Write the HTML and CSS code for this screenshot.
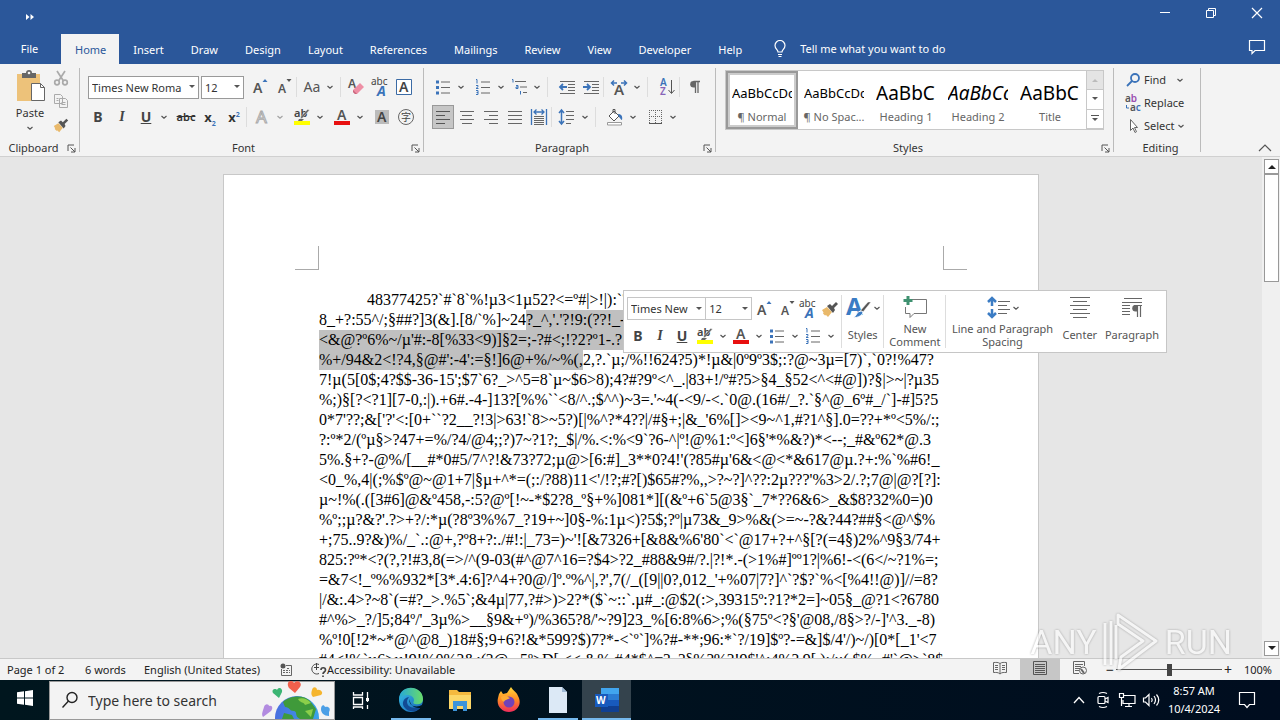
FILE: index.html
```html
<!DOCTYPE html>
<html lang="en">
<head>
<meta charset="utf-8">
<title>Word</title>
<link rel="stylesheet" href="styles.css">
</head>
<body>
<svg class="defs" aria-hidden="true">
  <symbol id="chev" viewBox="0 0 8 8"><path d="M1.5 3 4 5.200 6.500 3" fill="none" stroke="#555" stroke-width="1.200"/></symbol>
  <symbol id="launch" viewBox="0 0 9 9"><path d="M1 7V1h6M3.500 3.500 8 8M8 4v4H4" fill="none" stroke="#555"/></symbol>
  <symbol id="clear-style" viewBox="0 0 20 20"><text x="1" y="8" font-size="10" fill="#444">abc</text><text x="7" y="19" font-size="14" font-weight="700" font-style="italic" fill="#3b73b9">A</text></symbol>
  <symbol id="grow" viewBox="0 0 20 20"><text x="3" y="16" font-size="14" font-weight="600" fill="#555">A</text><path d="m12.500 5 2.500-3 2.500 3z" fill="#3b73b9"/></symbol>
  <symbol id="shrink" viewBox="0 0 20 20"><text x="4" y="16" font-size="12" font-weight="600" fill="#555">A</text><path d="m12.500 2 2.500 3 2.500-3z" fill="#555"/></symbol>
  <symbol id="hilite" viewBox="0 0 20 20"><text x="2" y="10" font-size="11" font-weight="600" fill="#444">ab</text><path d="m17.500 3-7 8-2 1 .5-2.500 6.500-7z" fill="#666" stroke="#f3f3f3" stroke-width=".4"/><path d="M7 12h5l-2 2H6z" fill="#666"/><path d="M2 14h16v4H2z" fill="#ff0"/></symbol>
  <symbol id="color" viewBox="0 0 20 20"><text x="5" y="13" font-size="14" font-weight="600" fill="#555">A</text><path d="M2 14h16v4H2z" fill="#e81010"/></symbol>
  <symbol id="bullets" viewBox="0 0 20 20"><path d="M3 3.500h3v3H3zM3 9h3v3H3zM3 14.500h3v3H3z" fill="#3b73b9"/><path d="M8 5h9M8 10.500h9M8 16h9" stroke="#666"/></symbol>
  <symbol id="numbers" viewBox="0 0 20 20"><path d="M3 2.500h1v4M3 8.500h2v1.200L3 11.500h2.500M3 13.500h2v4H3M3.500 15.500H5" fill="none" stroke="#3b73b9"/><path d="M8 5h9M8 10.500h9M8 16h9" stroke="#666"/></symbol>
  <symbol id="brush" viewBox="0 0 20 20"><path d="m2 11 5-3 5 5-4 5-2-2-1 .5-2-2 .500-1z" fill="#e9b96b"/><path d="m7 7 3-2 2 2 4-4 2 2-4 4 1 2-2 3z" fill="#555"/></symbol>
  <symbol id="spacing" viewBox="0 0 20 20"><path d="M4.500 3v14M2 6l2.500-3L7 6M2 14l2.500 3L7 14" fill="none" stroke="#3b73b9" stroke-width="1.500"/><path d="M9 4.500h8M9 8.500h8M9 12.500h8M9 16.500h5" stroke="#666"/></symbol>
  <symbol id="center" viewBox="0 0 20 20"><path d="M3 4.500h14M5 8.500h10M3 12.500h14M5 16.500h10" stroke="#666"/></symbol>
</svg>

<div class="app">
  <header class="title">
    <button class="more" aria-label="More commands"><svg width="10" height="8" viewBox="0 0 10 8"><path d="M1 1v6l3.500-3zM5.500 1v6L9 4z" fill="#fff"/></svg></button>
    <div class="win">
      <button aria-label="Minimize"><svg width="12" height="12"><path d="M1 5.500h10" stroke="#fff"/></svg></button>
      <button aria-label="Restore"><svg width="12" height="12" fill="none" stroke="#fff"><path d="M1.500 3.500h7v7h-7zM3.500 3.500v-2h7v7h-2"/></svg></button>
      <button aria-label="Close"><svg width="12" height="12"><path d="m1 1 10 10M11 1 1 11" stroke="#fff" stroke-width="1.200"/></svg></button>
    </div>
  </header>
  <nav class="tabs">
    <button class="file">File</button>
    <button class="on">Home</button><button>Insert</button><button>Draw</button><button>Design</button><button>Layout</button><button>References</button><button>Mailings</button><button>Review</button><button>View</button><button>Developer</button><button>Help</button>
    <button class="tell"><svg width="14" height="18" viewBox="0 0 14 18" fill="none" stroke="#fff" stroke-width="1.200"><path d="M5 12c0-2.500-3-3-3-6.500a5 5 0 0 1 10 0C12 9 9 9.500 9 12zM5 14.500h4M5.500 16.500h3"/></svg>Tell me what you want to do</button>
    <button class="comment" aria-label="Comments"><svg width="18" height="16" fill="none" stroke="#fff" stroke-width="1.200"><path d="M1.500 1.500h15v10H7l-3 3v-3H1.500z"/></svg></button>
  </nav>

  <section class="ribbon">
    <div class="group clip">
      <div class="clipbody">
        <button class="paste"><svg width="32" height="32" viewBox="0 0 32 32"><path d="M3 4h23v27H3z" fill="#edc27a"/><path d="M8 3h4a3 3 0 0 1 6 0h4v5H8z" fill="#666"/><circle cx="15" cy="3" r="1.300" fill="#f3f3f3"/><path d="M17.500 13.500h9l4 4v13h-13z" fill="#fff" stroke="#666"/><path d="M26.500 13.500v4h4" fill="none" stroke="#666"/></svg>Paste<svg class="c"><use href="#chev"/></svg></button>
        <div class="clipcol">
          <button aria-label="Cut"><svg width="16" height="16" fill="none" stroke="#aaa" stroke-width="1.700"><path d="m4 1 6.500 10M12 1 5.500 11"/><circle cx="4" cy="12.500" r="2.300"/><circle cx="12" cy="12.500" r="2.300"/></svg></button>
          <button aria-label="Copy"><svg width="16" height="16" fill="#f3f3f3" stroke="#aaa"><path d="M1.500 1.500h6l2 2v7h-8zM6.500 5.500h6l2 2v7h-8zM8.500 9.500h4M8.500 11.500h4M3.500 5.500h2M3.500 7.500h2"/></svg></button>
          <button aria-label="Format painter"><svg width="18" height="18"><use href="#brush"/></svg></button>
        </div>
      </div>
      <div class="label"><span>Clipboard</span><svg><use href="#launch"/></svg></div>
    </div>

    <div class="group font">
      <div class="row">
        <select class="face" aria-label="Font"><option>Times New Roma</option></select>
        <select class="size" aria-label="Font size"><option>12</option></select>
        <button class="ib g4" aria-label="Grow font"><svg><use href="#grow"/></svg></button>
        <button class="ib" aria-label="Shrink font"><svg><use href="#shrink"/></svg></button>
        <i class="sep"></i>
        <button class="ib aa">Aa</button><button class="cv" aria-label="Case options"><svg><use href="#chev"/></svg></button>
        <i class="sep g4"></i>
        <button class="ib" aria-label="Clear formatting"><svg viewBox="0 0 20 20"><text x="2" y="11" font-size="12" font-weight="600" fill="#555">A</text><path d="m7 13 7-7 4 4-7 7H9l-2-2z" fill="#ee8fa5"/><path d="m7 13 4 4H9l-2-2z" fill="#c8667d"/></svg></button>
        <button class="ib" aria-label="Phonetic guide"><svg><use href="#clear-style"/></svg></button>
        <button class="ib" aria-label="Character border"><svg viewBox="0 0 20 20"><path d="M2.500 2.500h15v15h-15z" fill="#fff" stroke="#3b6ba5"/><text x="5" y="15" font-size="14" font-weight="600" fill="#444">A</text></svg></button>
      </div>
      <div class="row two">
        <button class="ib b">B</button><button class="ib i">I</button><button class="ib u">U</button><button class="cv" aria-label="Underline options"><svg><use href="#chev"/></svg></button>
        <button class="ib s g4">abc</button><button class="ib x">x<sub>2</sub></button><button class="ib x">x<sup>2</sup></button>
        <i class="sep"></i>
        <button class="ib" aria-label="Text effects"><svg viewBox="0 0 20 20"><text x="4" y="16" font-size="17" fill="#f3f3f3" stroke="#aaa" stroke-width="1">A</text></svg></button><button class="cv" aria-label="Text effect options"><svg opacity=".5"><use href="#chev"/></svg></button>
        <button class="ib g4" aria-label="Highlight"><svg><use href="#hilite"/></svg></button><button class="cv" aria-label="Highlight options"><svg><use href="#chev"/></svg></button>
        <button class="ib g4" aria-label="Font color"><svg><use href="#color"/></svg></button><button class="cv" aria-label="Color options"><svg><use href="#chev"/></svg></button>
        <button class="ib g4" aria-label="Character shading"><svg viewBox="0 0 20 20"><path d="M3 3h14v14H3z" fill="#bbb"/><text x="5" y="15" font-size="14" font-weight="600" fill="#444">A</text></svg></button>
        <button class="ib" aria-label="Enclose characters"><svg viewBox="0 0 20 20"><circle cx="10" cy="10" r="7.500" fill="none" stroke="#666"/><text x="5" y="14" font-size="10" class="cjk" fill="#444">字</text></svg></button>
      </div>
      <div class="label"><span>Font</span><svg><use href="#launch"/></svg></div>
    </div>

    <div class="group para">
      <div class="row">
        <button class="ib" aria-label="Bullets"><svg><use href="#bullets"/></svg></button><button class="cv" aria-label="Bullet options"><svg><use href="#chev"/></svg></button>
        <button class="ib g4" aria-label="Numbering"><svg><use href="#numbers"/></svg></button><button class="cv" aria-label="Numbering options"><svg><use href="#chev"/></svg></button>
        <button class="ib" aria-label="Multilevel list"><svg viewBox="0 0 20 20"><path d="M3 2.500h1v3M7 8.500h2v3H7v-1.500h2M11.500 14v3.500" fill="none" stroke="#3b73b9"/><path d="M6 4.500h11M11 10h7M14 15.500h4" stroke="#666"/></svg></button><button class="cv" aria-label="Multilevel options"><svg><use href="#chev"/></svg></button>
        <i class="sep g4"></i>
        <button class="ib g4" aria-label="Decrease indent"><svg viewBox="0 0 20 20"><path d="M3 4.500h15M11 7.500h7M11 10.500h7M11 13.500h7M3 16.500h15" stroke="#666"/><path d="M10 10H4M6 7l-3 3 3 3" fill="none" stroke="#3b73b9" stroke-width="1.800"/></svg></button>
        <button class="ib" aria-label="Increase indent"><svg viewBox="0 0 20 20"><path d="M3 4.500h15M11 7.500h7M11 10.500h7M11 13.500h7M3 16.500h15" stroke="#666"/><path d="M2 10h7M6 7l3 3-3 3" fill="none" stroke="#3b73b9" stroke-width="1.800"/></svg></button>
        <i class="sep"></i>
        <button class="ib" aria-label="Asian layout"><svg viewBox="0 0 20 20"><text x="5" y="18" font-size="15" font-weight="600" fill="#555">A</text><path d="M8 6H3M5 3.500 2.500 6 5 8.500M12 6h5M15 3.500 17.500 6 15 8.500" fill="none" stroke="#3b73b9" stroke-width="1.500"/></svg></button><button class="cv" aria-label="Layout options"><svg><use href="#chev"/></svg></button>
        <i class="sep g4"></i>
        <button class="ib g4" aria-label="Sort"><svg viewBox="0 0 20 20"><text x="3" y="9" font-size="10" font-weight="600" fill="#3b73b9">A</text><text x="3" y="18" font-size="10" font-weight="600" fill="#8764b8">Z</text><path d="M14.500 3v13M11.500 13l3 3.500 3-3.500" fill="none" stroke="#555"/></svg></button>
        <i class="sep"></i>
        <button class="ib" aria-label="Show marks"><svg viewBox="0 0 20 20"><path d="M15 4.500H8.500M10.500 4v12M13 4v12" fill="none" stroke="#666" stroke-width="1.300"/><path d="M10 4H8.500a3.300 3.300 0 0 0 0 6.600H10z" fill="#666"/></svg></button>
      </div>
      <div class="row two">
        <button class="ib sel" aria-label="Align left"><svg viewBox="0 0 20 20"><path d="M3 4.500h14M3 8.500h9M3 12.500h14M3 16.500h9" stroke="#555"/></svg></button>
        <button class="ib" aria-label="Center"><svg><use href="#center"/></svg></button>
        <button class="ib" aria-label="Align right"><svg viewBox="0 0 20 20"><path d="M3 4.500h14M8 8.500h9M3 12.500h14M8 16.500h9" stroke="#666"/></svg></button>
        <button class="ib" aria-label="Justify"><svg viewBox="0 0 20 20"><path d="M3 4.500h14M3 8.500h14M3 12.500h14M3 16.500h14" stroke="#666"/></svg></button>
        <button class="ib" aria-label="Distribute"><svg viewBox="0 0 20 20"><path d="M5 9.500h10M5 11.500h10M5 13.500h10M5 15.500h10M5 17.500h10" stroke="#666"/><path d="M2.500 2v16M17.500 2v16M5 5h10M7.500 2.500 5 5l2.500 2.500M12.500 2.500 15 5l-2.500 2.500" fill="none" stroke="#3b73b9" stroke-width="1.300"/></svg></button>
        <i class="sep"></i>
        <button class="ib" aria-label="Line spacing"><svg><use href="#spacing"/></svg></button><button class="cv" aria-label="Spacing options"><svg><use href="#chev"/></svg></button>
        <i class="sep g4"></i>
        <button class="ib g4" aria-label="Shading"><svg viewBox="0 0 20 20"><path d="m4 9 5-5 5 5-5 5zM8 6V2.500h2V7" fill="#fff" stroke="#555"/><path d="M13 7c3 0 5 2 4 6-1 0-1.500-2-3-3z" fill="#3b73b9"/><path d="M2.500 15.500h14v2.500h-14z" fill="#fff" stroke="#999"/></svg></button><button class="cv" aria-label="Shading options"><svg><use href="#chev"/></svg></button>
        <button class="ib g4" aria-label="Borders"><svg viewBox="0 0 20 20"><path d="M4 3.500h13M4 9.500h13M4.500 3v13M10.500 3v13M16.500 3v13" stroke="#666" stroke-dasharray="1 1"/><path d="M4 16.500h13" stroke="#555"/></svg></button><button class="cv" aria-label="Border options"><svg><use href="#chev"/></svg></button>
      </div>
      <div class="label"><span>Paragraph</span><svg><use href="#launch"/></svg></div>
    </div>

    <div class="group styles">
      <div class="gallery">
        <button class="on"><b class="n">AaBbCcDc</b><span>¶ Normal</span></button>
        <button><b class="n">AaBbCcDc</b><span>¶ No Spac...</span></button>
        <button><b>AaBbC</b><span>Heading 1</span></button>
        <button><b class="it">AaBbCc</b><span>Heading 2</span></button>
        <button><b>AaBbC</b><span>Title</span></button>
        <div class="gscroll">
          <button class="off" aria-label="Scroll up"><svg width="6" height="4"><path d="m0 4 3-3 3 3z" fill="#bbb"/></svg></button>
          <button aria-label="Scroll down"><svg width="6" height="4"><path d="m0 0 3 3 3-3z" fill="#555"/></svg></button>
          <button aria-label="More styles"><svg width="8" height="8"><path d="M0 .5h8" stroke="#555"/><path d="m1 3 3 3 3-3z" fill="#555"/></svg></button>
        </div>
      </div>
      <div class="label"><span>Styles</span><svg><use href="#launch"/></svg></div>
    </div>

    <div class="group edit">
      <button><svg width="18" height="18" fill="none" stroke="#3b73b9" stroke-width="1.800"><circle cx="11" cy="7" r="4"/><path d="m8 10-5 5"/></svg>Find<svg class="c m"><use href="#chev"/></svg></button>
      <button><svg width="18" height="18"><text x="1" y="8" font-size="10" font-weight="600" fill="#555">a<tspan fill="#9b4fb0">b</tspan></text><text x="6" y="17" font-size="10" font-weight="600" fill="#555">a<tspan fill="#3b73b9">c</tspan></text><path d="M2.500 11v3H5" fill="none" stroke="#3b73b9"/></svg>Replace</button>
      <button><svg width="18" height="18" fill="#fff" stroke="#666"><path d="M6.500 2.500v11l2.500-2.500 2 4.500 1.500-.8-2-4.200h3z"/></svg>Select<svg class="c"><use href="#chev"/></svg></button>
      <div class="label"><span>Editing</span></div>
    </div>
    <button class="collapse" aria-label="Collapse ribbon"><svg width="14" height="8"><path d="m1 7 6-6 6 6" fill="none" stroke="#555" stroke-width="1.200"/></svg></button>
  </section>

  <main class="work">
    <div class="canvas">
      <article class="page">
        <div class="corners"><i></i><i></i></div>
        <div class="text">
<p class="first">48377425?`#`8`%!µ3&lt;1µ52?&lt;=º#|&gt;!|):`?</p>
<p>8_+?:55^/;§##?]3(&amp;].[8/`%]~24<mark>?_^,'.'?!9:(??!_-:+%</mark></p>
<p><mark>&lt;&amp;@?º6%~/µ'#:-8[%33&lt;9)]§2=;-?#&lt;;!?2?º1-.?:</mark></p>
<p><mark>%+/94&amp;2&lt;!?4,§@#':-4':=§!]6@+%/~%(,</mark>2,?.`µ;/%!!624?5)*!µ&amp;|0º9º3$;:?@~3µ=[7)`,`0?!%47?</p>
<p>7!µ(5[0$;4?$$-36-15';$7`6?_&gt;^5=8`µ~$6&gt;8);4?#?9º&lt;^_.|83+!/º#?5&gt;§4_§52&lt;^&lt;#@])?§|&gt;~|?µ35</p>
<p>%;)§[?&lt;?1][7-0,:|).+6#.-4-]13?[%%``&lt;8/^.;$^^)~3=.'~4(-&lt;9/-&lt;.`0@.(16#/_?.`§^@_6º#_/`]-#]5?5</p>
<p>0*7'??;&amp;['?'&lt;:[0+``?2__?!3|&gt;63!`8&gt;~5?)[|%^?*4??|/#§+;|&amp;_'6%[]&gt;&lt;9~^1,#?1^§].0=??+*º&lt;5%/:;</p>
<p>?:º*2/(ºµ§&gt;?47+=%/?4/@4;;?)7~?1?;_$|/%.&lt;:%&lt;9`?6-^|º!@%1:º&lt;]6§'*%&amp;?)*&lt;--;_#&amp;º62*@.3</p>
<p>5%.§+?-@%/[__#*0#5/7^?!&amp;73?72;µ@&gt;[6:#]_3**0?4!'(?85#µ'6&amp;&lt;@&lt;*&amp;617@µ.?+:%`%#6!_</p>
<p>&lt;0_%,4|(;%$º@~@1+7|§µ+^*=(;:/?88)11&lt;'/!?;#?[)$65#?%,,&gt;?~?]^??:2µ???'%3&gt;2/.?;7@|@?[?]:</p>
<p>µ~!%(.([3#6]@&amp;º458,-:5?@º[!~-*$2?8_º§+%]081*][(&amp;º+6`5@3§`_7*??6&amp;6&gt;_&amp;$8?32%0=)0</p>
<p>%º;;µ?&amp;?'.?&gt;+?/:*µ(?8º3%%7_?19+~]0§-%:1µ&lt;)?5$;?º|µ73&amp;_9&gt;%&amp;(&gt;=~-?&amp;?44?##§&lt;@^$%</p>
<p>+;75..9?&amp;)%/_`.:@+,?º8+?:./#!:|_73=)~'![&amp;7326+[&amp;8&amp;%6'80`&lt;`@17+?+^§[?(=4§)2%^9§3/74+</p>
<p>825:?º*&lt;?(?,?!#3,8(=&gt;/^(9-03(#^@7^16=?$4&gt;?2_#88&amp;9#/?.|?!*.-(&gt;1%#]ºº1?|%6!-&lt;(6&lt;/~?1%=;</p>
<p>=&amp;7&lt;!_º%%932*[3*.4:6]?^4+?0@/]º.º%^|,?',7(/_([9||0?,012_'+%07|7?]^`?$?`%&lt;[%4!!@)]//=8?</p>
<p>|/&amp;:.4&gt;?~8`(=#?_&gt;.%5`;&amp;4µ|77,?#&gt;)&gt;2?*($`~::`.µ#_:@$2(:&gt;,39315º:?1?*2=]~05§_@?1&lt;?6780</p>
<p>#^%&gt;_?/]5;84º/'_3µ%&gt;__§9&amp;+º)/%365?8/'~?9]23_%[6:8%6&gt;;%(§75º&lt;?§'@08,/8§&gt;?/-]'^3._-8)</p>
<p>%º!0[!2*~*@^@8_)18#§;9+6?!&amp;*599?$)7?*-&lt;`º`]%?#-**;96:*`?/19]$º?-=&amp;]$/4'/)~/)[0*[_1'&lt;7</p>
<p>#4&lt;!%`µ6&gt;µ!9!%0%?&amp;:(?@._5º&gt;D[.&lt;&lt;.&amp;%.#4*$^=?_?§%?%?!9$'^:4%?.9[.):/::(.$%_#'`@&gt;`8$</p>
        </div>
      </article>
    </div>
    <div class="vbar">
      <button aria-label="Scroll up"><svg width="8" height="5"><path d="m0 5 4-4 4 4z" fill="#222"/></svg></button>
      <div class="thumb"></div>
      <button class="down" aria-label="Scroll down"><svg width="8" height="5"><path d="m0 0 4 4 4-4z" fill="#222"/></svg></button>
    </div>
    <div class="mini">
      <div class="mleft">
        <div class="mrow">
          <select class="face" aria-label="Mini font"><option>Times New</option></select><select class="size" aria-label="Mini font size"><option>12</option></select>
          <button class="ib" aria-label="Grow"><svg><use href="#grow"/></svg></button><button class="mb" aria-label="Shrink"><svg><use href="#shrink"/></svg></button><button class="mb" aria-label="Style"><svg><use href="#clear-style"/></svg></button><button class="mb" aria-label="Painter"><svg><use href="#brush"/></svg></button>
        </div>
        <div class="mrow">
          <button class="mb b">B</button><button class="mb i">I</button><button class="mb u">U</button>
          <button class="ib" aria-label="Mini highlight"><svg><use href="#hilite"/></svg></button><button class="cv" aria-label="Options"><svg><use href="#chev"/></svg></button>
          <button class="ib" aria-label="Mini color"><svg><use href="#color"/></svg></button><button class="cv" aria-label="Options"><svg><use href="#chev"/></svg></button>
          <button class="ib" aria-label="Mini bullets"><svg><use href="#bullets"/></svg></button><button class="cv" aria-label="Options"><svg><use href="#chev"/></svg></button>
          <button class="ib" aria-label="Mini numbering"><svg><use href="#numbers"/></svg></button><button class="cv" aria-label="Options"><svg><use href="#chev"/></svg></button>
        </div>
      </div>
      <button class="big w43"><span class="ic"><svg width="28" height="26" viewBox="0 0 28 26"><text x="1" y="20" font-size="24" font-weight="700" fill="#3b7cc4">A</text><path d="m26 7-8 10-3-1 8-9z" fill="#555" stroke="#fff" stroke-width=".5"/><path d="M17 16c2 1 1 6-9 7 4-2 3-7 9-7z" fill="#3b7cc4" stroke="#fff"/></svg><svg class="c"><use href="#chev"/></svg></span><span class="tx">Styles</span></button>
      <button class="big w63"><span class="ic"><svg width="26" height="26" viewBox="0 0 26 26" fill="none"><path d="M10 4.500h14.500v14H12l-4 4v-4H3.500V12" stroke="#777"/><path d="M6 1v9M1.500 5.500h9" stroke="#3f9170" stroke-width="3"/></svg></span><span class="tx">New<br>Comment</span></button>
      <button class="big w113"><span class="ic"><svg width="26" height="26" viewBox="0 0 26 26" fill="none"><path d="M6 3v8M6 22v-8M2 7l4-4 4 4M2 18l4 4 4-4" stroke="#3b7cc4" stroke-width="2.500"/><path d="M12 6.500h12M12 10.500h9M12 14.500h12M12 18.500h9" stroke="#666"/></svg><svg class="c"><use href="#chev"/></svg></span><span class="tx">Line and Paragraph<br>Spacing</span></button>
      <button class="big w43 nb"><span class="ic"><svg width="26" height="26" viewBox="0 0 26 26"><path d="M3 2.500h20M6 6.500h14M3 10.500h20M6 14.500h14M3 18.500h20M6 22.500h14" stroke="#666"/></svg></span><span class="tx">Center</span></button>
      <button class="big w63 nb"><span class="ic"><svg width="26" height="26" viewBox="0 0 26 26"><path d="M5 3.500h18M3 7.500h20M3 10.500h8M3 13.500h8M3 16.500h8M3 19.500h8M15 10.500h8M18.500 10v12M21.500 10v12" stroke="#666" stroke-width="1.200"/><path d="M18 10h-1.500a3 3 0 0 0 0 6.500H18z" fill="#666"/></svg></span><span class="tx">Paragraph</span></button>
    </div>
  </main>

  <footer class="status">
    <span class="pg">Page 1 of 2</span><span class="wd">6 words</span><span class="lg">English (United States)</span>
    <svg class="mac" width="14" height="14"><circle cx="4" cy="3" r="2.500" fill="#555"/><path d="M7 2.500h5.500v10h-10V6" fill="none" stroke="#666"/><path d="M4 7.500h7M4 9.500h7M8 5.500h3" stroke="#666" stroke-dasharray="2 1"/></svg>
    <svg width="16" height="16" fill="none" stroke="#444"><path d="M8 2.500a5 5 0 1 0 0 9M5.500 1v7M3 5.500h5"/><path d="M10 8c0-3 4.500-3 4.500 0 0 2-2.500 2-2.500 4M12 13.500V15" stroke-width="1.700"/></svg>
    <span>Accessibility: Unavailable</span>
    <div class="views">
      <button aria-label="Read mode"><svg width="16" height="14" fill="none" stroke="#666"><path d="M8 2.500C6 1 4 1.500 1.500 1.500v10C4 11.500 6 11 8 13c2-2 4-1.500 6.500-1.500v-10C12 1.500 10 1 8 2.500zV13M3 4.500h3M3 6.500h3M3 8.500h3M10 4.500h3M10 6.500h3M10 8.500h3"/></svg></button>
      <button class="on" aria-label="Print layout"><svg width="16" height="14" fill="none" stroke="#555"><path d="M1.500.5h13v13h-13zM3 3.500h10M3 5.500h10M3 7.500h10M3 9.500h10M3 11.500h10"/></svg></button>
      <button aria-label="Web layout"><svg width="16" height="14" fill="none" stroke="#666"><path d="M12.500 5V.5h-11v12H7M3 3.500h8M3 5.500h6M3 7.500h5M3 9.500h4"/><circle cx="11" cy="9.500" r="3.500"/><path d="m9 8 3 4" stroke-width="2"/></svg></button>
    </div>
    <button class="zm">−</button><input type="range" aria-label="Zoom" min="0" max="100" value="50"><button class="zm">+</button>
    <span class="pct">100%</span>
  </footer>

  <div class="taskbar">
    <button class="start" aria-label="Start"><svg width="16" height="16" fill="#fff"><path d="M0 2.300 7 1.300v6.200H0zM8 1.200 16 0v7.500H8zM0 8.500h7v6.200l-7-1zM8 8.500h8V16l-8-1.200z"/></svg></button>
    <label class="search">
      <svg width="18" height="18" fill="none" stroke="#222" stroke-width="1.400"><circle cx="11" cy="6.500" r="5"/><path d="m7.500 10-6 6.500"/></svg>
      <input type="text" placeholder="Type here to search" aria-label="Search">
      <svg width="74" height="38" viewBox="0 0 74 38"><defs><linearGradient id="gl" x2="1"><stop stop-color="#4a6fe0"/><stop offset="1" stop-color="#39a3e8"/></linearGradient></defs><circle cx="37" cy="37" r="22" fill="url(#gl)"/><path d="M23 21c6-6 20-8 27-1l6 8-3 10H40c-6-3-2-7-6-8-5 0-4-4-9-4zM24 32l8 2 2 4H22z" fill="#3f9a3a"/><path d="M38 18c4-2 10 0 13 4l-6 2c-1-3-5-2-7-6zM45 30l8-2-2 8z" fill="#8bcf4a"/><path d="M29 8c-4-7 3-9 5-5 3-4 9-1 6 4l-5 6z" fill="#f2604c" transform="translate(0 -1)"/><path d="M13 12c-2-4 3-5 4-3 2-4 6-1 5 2l-3 6z" fill="#3cb573"/><path d="M52 9c1-4 5-3 5 0 4-1 7 3 4 5l-8 2c-2-2-2-4-1-7z" fill="#f5b52e"/><path d="M4 26c1-4 5-3 5-1 4-1 4 3 2 5l-8 6c-2-3 0-6 1-10z" fill="#b28be0"/><path d="M61 28c0-4 3-5 4-2 4-1 6 2 4 5v4c-5 0-8-3-8-7z" fill="#4b9fe6"/></svg>
    </label>
    <button class="app-b tv" aria-label="Task view"><svg width="18" height="18" fill="none" stroke="#fff" stroke-width="1.300"><path d="M1.500 6.500h9v7h-9zM1.500 1v3h9V1M1.500 18v-2h9v2M15.500 1v10M15.500 14v4"/><path d="M14 7h3v3h-3z" fill="#fff" stroke="none"/></svg></button>
    <button class="app-b run" aria-label="Edge"><svg width="26" height="26" viewBox="0 0 26 26"><defs><linearGradient id="eg" y2="1"><stop stop-color="#39c1e8"/><stop offset="1" stop-color="#1560b5"/></linearGradient><linearGradient id="eh" x2="1"><stop stop-color="#26a8d8"/><stop offset="1" stop-color="#69dc68"/></linearGradient></defs><circle cx="13" cy="13" r="12" fill="url(#eg)"/><path d="M1 12C2-4 25-2 25 12c0 5-5 6-8 5-3-1-1-2-1-4 0-5-9-8-15-1z" fill="url(#eh)"/><path d="M11 10c-5 6 0 13 10 10 1 0 2-.5 2 0-3 5-12 6-16 1-4-4-2-10 4-11z" fill="#124b94"/><path d="M12 12c-2 4 2 9 10 7 -1 0 3-1 3-2l1 3-3 1c-8 1-12-5-11-9z" fill="#001622"/></svg></button>
    <button class="app-b" aria-label="Explorer"><svg width="22" height="24" viewBox="0 0 22 24"><path d="M0 2h8l2 2h12v17H0z" fill="#f4b93f"/><path d="M0 7h22v14H0z" fill="#fcd768"/><path d="M4 13h14v10h-4v-5H8v5H4z" fill="#3c94d9"/></svg></button>
    <button class="app-b" aria-label="Firefox"><svg width="24" height="26" viewBox="0 0 24 26"><defs><linearGradient id="ff" x2="0" y2="1"><stop stop-color="#ffda3b"/><stop offset=".5" stop-color="#ff8b24"/><stop offset="1" stop-color="#ef2b5c"/></linearGradient></defs><path d="M2 7l2-3 2 3 4-1 4-6c2 4 6 5 7 9 5 9-2 16-9 16S-1 19 1 11z" fill="url(#ff)"/><circle cx="12" cy="15" r="5.500" fill="#7242b8"/><path d="M4 10c4-3 7 0 9 1-2 2-5 1-6 4-2-1-3-3-3-5z" fill="#ffad35"/></svg></button>
    <button class="app-b run" aria-label="Document"><svg width="18" height="26" viewBox="0 0 18 26"><path d="M0 0h13l5 5v21H0z" fill="#dce9f6"/><path d="M13 0v5h5" fill="#9fbad6"/></svg></button>
    <button class="app-b run act" aria-label="Word"><svg width="26" height="26" viewBox="0 0 26 26"><path d="M7 1h18v6H7z" fill="#41a5ee"/><path d="M7 7h18v6H7z" fill="#2b7cd3"/><path d="M7 13h18v6H7z" fill="#185abd"/><path d="M7 19h18v6H7z" fill="#103f91"/><path d="M1 7h13v13H1z" fill="#185abd"/><text x="2" y="17" font-size="10" font-weight="700" fill="#fff">W</text></svg></button>
    <div class="tray">
      <svg width="24" height="16" fill="none" stroke="#fff" stroke-width="1.300"><path d="m7 11 5-5.500 5 5.500"/></svg>
      <svg width="24" height="18" fill="none" stroke="#fff" stroke-width="1.200"><rect x="7" y="5.500" width="7" height="7" rx="1"/><path d="M14 8l3-1.500v5L14 10M8 2.500q4-2 8 0M8 15.500q4 2 8 0"/></svg>
      <svg width="24" height="16" fill="none" stroke="#fff" stroke-width="1.200"><path d="M8 3.500h12v8H8V8M14 12v3M10 14.500h7M4.500 1.500h4v4h-4zM6.500 6v8"/></svg>
      <svg width="24" height="16" fill="none" stroke="#fff" stroke-width="1.200"><path d="M4.500 6v4h2l3.500 3.500v-11L6.500 6zM12.500 6q1.500 2 0 4M15 4q3 4 0 8M17.500 2.500q4.500 5.500 0 11"/></svg>
      <div class="clock">8:57 AM<br>10/4/2024</div>
      <svg class="note" width="18" height="18" fill="none" stroke="#fff" stroke-width="1.200"><path d="M1.500 1.500h15v12h-5L9 16.500l-2.500-3h-5z"/></svg>
    </div>
  </div>
  <div class="wm" aria-hidden="true"><span>ANY</span><svg width="60" height="62" viewBox="0 0 60 62" fill="none" stroke="#fff" stroke-width="3" stroke-linejoin="round"><path d="M4 12v42M10 10v44M15 14v34M17 4l38 26-37 28 2-12 22-16-25-17z"/></svg><span>RUN</span></div>
</div>
</body>
</html>
```
FILE: styles.css
```css
* { box-sizing: border-box; }
body { margin: 0; font: 12px/16px "Noto Sans", "Open Sans", sans-serif; color: #333; }
button { border: 0; background: none; padding: 0; font: inherit; color: inherit; }
.defs { display: none; }
.app { position: relative; display: flex; flex-direction: column; height: 100vh; overflow: hidden; }

.title { display: flex; justify-content: space-between; height: 34px; background: #2b579a; }
.more { width: 60px; }
.win { display: flex; padding-bottom: 4px; }
.win button { width: 46px; }
.tabs { display: flex; height: 30px; background: #2b579a; color: #fff; font-size: 11px; }
.tabs button { padding: 2px 13px 0 14px; }
.tabs .file { width: 58px; margin-right: 3px; padding-top: 0; }
.tabs .on { background: #f3f3f3; color: #2b579a; }
.tabs .tell { display: flex; align-items: center; gap: 13px; padding: 0 0 0 18px; }
.tabs .comment { margin-left: auto; padding: 0 14px; }

.ribbon { display: flex; height: 93px; padding: 4px 0; background: #f3f3f3; border-bottom: 1px solid #d0d0d0; font-size: 11px; }
.group { display: flex; flex-direction: column; padding-top: 7px; border-right: 1px solid #bbb; }
.label { display: flex; align-items: center; margin-top: auto; height: 8px; padding-right: 3px; }
.label span { flex: 1; text-align: center; }
.font .label span, .para .label span, .styles .label span { padding-right: 10px; }
.label svg { width: 9px; height: 9px; }
.row { display: flex; align-items: center; height: 24px; }
.two { margin-top: 6px; }
.ib, .mb { display: flex; align-items: center; justify-content: center; width: 24px; height: 24px; }
.mb { width: 22px; }
.ib svg, .mb svg { width: 20px; height: 20px; }
.cv { width: 12px; height: 24px; }
.cv svg, .c { width: 8px; height: 8px; }
.g4 { margin-left: 4px; }
.sep { width: 1px; height: 20px; margin-right: 3px; background: #ddd; }
select { appearance: none; height: 23px; border: 1px solid #999; padding: 0 3px; font: 11px "Noto Sans", sans-serif; color: #333; background: #fff url("data:image/svg+xml,%3Csvg xmlns='http://www.w3.org/2000/svg' width='6' height='4'%3E%3Cpath d='M0 0h6L3 3z' fill='%23555'/%3E%3C/svg%3E") no-repeat right 3px center; }
.face { width: 111px; }
.size { width: 43px; }
.b, .i, .u { color: #444; font-size: 14px; font-weight: 700; }
.i { font-family: "Liberation Serif", serif; font-style: italic; }
.u { text-decoration: underline; }
.s { text-decoration: line-through; font-weight: 600; }
.x { display: block; font-size: 13px; font-weight: 700; }
.x sub, .x sup { font-size: 7px; color: #3b73b9; line-height: 0; }
.aa { font-size: 14px; color: #555; }
.cjk { font-family: "Noto Sans CJK SC", sans-serif; }

.clip { width: 80px; }
.clip, .edit { padding-top: 0; }
.clipbody { display: flex; padding: 2px 0 0 12px; }
.paste { display: flex; flex-direction: column; align-items: center; gap: 3px; width: 36px; }
.clipcol { display: flex; flex-direction: column; gap: 7px; padding-left: 4px; }
.clipcol button { height: 16px; }
.font { width: 344px; padding-left: 6px; }
.font .face { margin: 0 2px; }
.para { width: 292px; padding-left: 7px; }
.sel { width: 22px; margin: 0 1px; background: #c6c6c6; border: 1px solid #999; }
.styles { width: 398px; padding: 2px 0 0 9px; }
.gallery { display: flex; width: 379px; height: 60px; border: 1px solid #c8c8c8; background: #fff; }
.gallery > button { display: flex; flex: none; flex-direction: column; align-items: center; justify-content: space-between; width: 72px; padding: 12px 4px 4px; color: #666; }
.gallery > .on { border: 2px solid #999; outline: 2px solid #ccc; outline-offset: -4px; padding: 10px 2px 2px; }
.gallery b { width: 60px; height: 20px; overflow: hidden; font-size: 19px; line-height: 20px; font-weight: 400; color: #000; text-align: left; white-space: nowrap; }
.gallery .n { font-size: 13px; }
.gallery .it { font-style: italic; }
.gallery span { white-space: nowrap; }
.gscroll { display: flex; flex-direction: column; flex: 1; border-left: 1px solid #c8c8c8; }
.gscroll button { display: flex; align-items: center; justify-content: center; flex: 1; border-bottom: 1px solid #c8c8c8; }
.gscroll .off { background: #e4e4e4; }
.edit { width: 87px; padding-left: 10px; }
.edit button { display: flex; align-items: center; gap: 2px; height: 23px; }
.edit .m { margin-left: 8px; }
.collapse { align-self: flex-end; margin: 0 8px 0 auto; height: 12px; }

.work { position: relative; display: flex; flex: 1; min-height: 0; background: #e6e6e6; }
.canvas { flex: 1; overflow: hidden; padding-top: 17px; }
.page { width: 816px; height: 1056px; margin: 0 auto; padding: 71px 71px; background: #fff; border: 1px solid #c8c8c8; }
.corners { display: flex; justify-content: space-between; height: 24px; }
.corners i { width: 24px; border: solid #aaa; border-width: 0 1px 1px 0; }
.corners i + i { border-width: 0 0 1px 1px; }
.text { padding: 20px 24px; font: 16px/20px "Liberation Serif", serif; color: #000; white-space: nowrap; }
.text p { margin: 0; }
.text .first { text-indent: 48px; }
mark { display: inline-block; background: #c0c0c0; color: #000; }
.vbar { display: flex; flex-direction: column; width: 18px; padding: 2px 1px 2px 2px; background: #f0f0f0; }
.vbar button { display: flex; align-items: center; justify-content: center; height: 15px; border: 1px solid #999; background: #fff; }
.vbar .down { margin-top: auto; }
.thumb { height: 108px; border: 1px solid #999; background: #fff; }

.mini { position: absolute; left: 623px; top: 133px; display: flex; width: 544px; height: 63px; padding: 4px 3px; background: #fff; border: 1px solid #c6c6c6; font-size: 11px; color: #555; }
.mleft { width: 214px; }
.mrow { display: flex; align-items: center; height: 27px; }
.mini .face { width: 80px; }
.mini .size { width: 46px; border-left: 0; }
.mini select { border-color: #c6c6c6; }
.big { display: flex; flex-direction: column; align-items: center; border-left: 1px solid #ddd; }
.nb { border: 0; }
.ic { display: flex; align-items: center; height: 26px; }
.tx { display: flex; flex: 1; align-items: center; line-height: 13px; text-align: center; white-space: nowrap; }
.w43 { width: 43px; }
.w63 { width: 63px; }
.w113 { width: 115px; }

.status { display: flex; align-items: center; height: 22px; padding: 0 8px 0 7px; border-top: 1px solid #c8c8c8; background: #f3f3f3; font-size: 11px; color: #222; white-space: nowrap; }
.pg { width: 78px; }
.wd { width: 59px; }
.lg { width: 135px; }
.mac { margin-right: 18px; }
.views { display: flex; align-self: stretch; margin-left: auto; margin-right: 4px; }
.views button { width: 40px; }
.views .on { background: #c6c6c6; }
.zm { width: 12px; font-size: 14px; }
.status input { appearance: none; width: 106px; height: 12px; margin: 0; background: linear-gradient(#555, #555) center / 100% 1px no-repeat; }
.status input::-webkit-slider-thumb { appearance: none; width: 5px; height: 12px; background: #444; }
.pct { width: 38px; text-align: right; }

.taskbar { display: flex; align-items: center; height: 40px; background: linear-gradient(90deg, #00161e, #000d1f); color: #fff; }
.start { width: 49px; }
.search { display: flex; align-items: center; width: 286px; height: 39px; padding: 0 0 0 11px; background: #f3f3f3; border: 1px solid #999; }
.search input { flex: 1; min-width: 0; border: 0; padding: 0 0 0 9px; background: none; font: 14px "Noto Sans", sans-serif; }
.search input::placeholder { color: #333; }
.app-b { display: flex; align-items: center; justify-content: center; width: 49px; height: 40px; }
.tv { width: 51px; }
.run { background: linear-gradient(#76b9ed, #76b9ed) center bottom / 40px 2px no-repeat; }
.act { background: #34434d linear-gradient(#76b9ed, #76b9ed) bottom / 100% 2px no-repeat; }
.tray { display: flex; align-items: center; margin-left: auto; padding-right: 24px; }
.clock { width: 62px; text-align: center; font-size: 11px; line-height: 18px; }
.note { margin-left: 13px; }
.wm { position: absolute; right: 48px; bottom: 47px; display: flex; align-items: center; gap: 4px; font: 34px/62px "Roboto", sans-serif; color: #fff; opacity: .6; filter: drop-shadow(0 0 1px #777); }
```
